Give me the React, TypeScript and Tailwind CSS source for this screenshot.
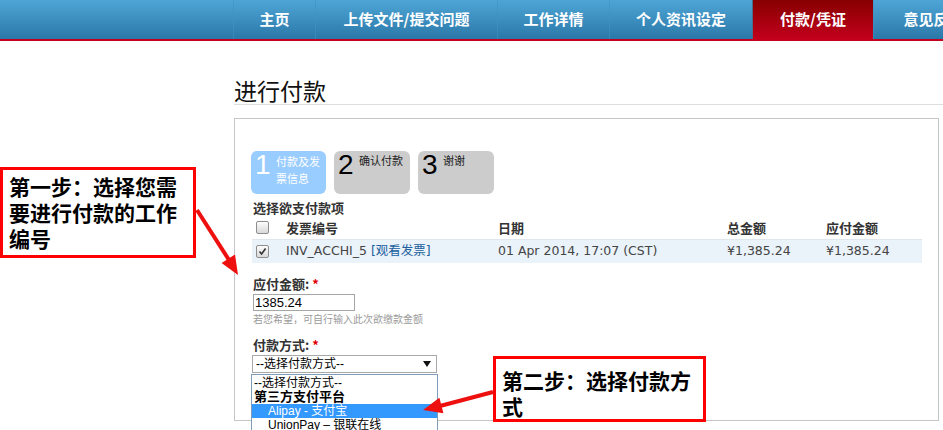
import React from "react";

const navItems = [
  { label: "主页", cls: "w-[82px]" },
  { label: "上传文件/提交问题", cls: "w-[182px]" },
  { label: "工作详情", cls: "w-[112px]" },
  { label: "个人资讯设定", cls: "w-[143px]" },
  { label: "付款/凭证", cls: "w-[121px]", active: true },
  { label: "意见反馈", cls: "w-[120px]" },
];

function Check({ checked }: { checked?: boolean }) {
  return (
    <span className="inline-flex w-[13px] h-[13px] border border-[#8e8e8e] rounded-[2px] bg-linear-to-b from-[#fdfdfd] to-[#d9d9d9] items-center justify-center">
      {checked && (
        <svg width="9" height="9" viewBox="0 0 9 9">
          <path d="M1.5 4.5 L3.6 7 L7.6 1.5" fill="none" stroke="#333" strokeWidth="1.6" />
        </svg>
      )}
    </span>
  );
}

export default function App() {
  const cjk = "font-['Noto_Sans_CJK_SC',sans-serif]";
  return (
    <div className="relative w-[943px] h-[430px] overflow-hidden bg-white font-['DejaVu_Sans','Noto_Sans_CJK_SC',sans-serif]">
      {/* Nav */}
      <nav className="h-[41px] border-b-2 border-[#c4001c] bg-linear-to-b from-[#4ea6d6] to-[#2a78a9] flex pl-[233px]">
        {navItems.map((it) => (
          <div
            key={it.label}
            className={`${it.cls} shrink-0 h-[39px] flex items-center justify-center border-l text-white font-bold text-[15px] whitespace-nowrap ${cjk} ${
              it.active ? "bg-linear-to-b from-[#870000] to-[#c3001c] border-[#4a6f8c]" : "border-[#3f93c5]/60"
            }`}
          >
            {it.label}
          </div>
        ))}
      </nav>

      {/* Main */}
      <main className="pl-[234px]">
        <h1 className={`mt-[35px] h-[29px] leading-[28px] text-[23px] text-[#111] font-normal border-b border-[#dedede] ${cjk}`}>
          进行付款
        </h1>

        <section className="mt-[13px] w-[705px] h-[303px] border border-[#c6c6c6] pl-[17px] pt-[32px]">
          {/* Steps */}
          <div className="flex gap-[8px] -ml-[1px]">
            <div className="w-[75px] h-[43px] rounded-[6px] bg-[#99ccff] flex items-start pl-[4px]">
              <span className="w-[16px] text-[28px] leading-[28px] text-white font-['Liberation_Sans',sans-serif]">1</span>
              <span className={`ml-[5px] mt-[2px] w-[46px] text-[11px] leading-[17px] text-white ${cjk}`}>付款及发票信息</span>
            </div>
            <div className="w-[76px] h-[43px] rounded-[6px] bg-[#cccccc] flex items-start pl-[4px]">
              <span className="w-[16px] text-[28px] leading-[28px] text-black font-['Liberation_Sans',sans-serif]">2</span>
              <span className={`ml-[5px] mt-[1px] text-[11px] leading-[17px] text-[#222] ${cjk}`}>确认付款</span>
            </div>
            <div className="w-[76px] h-[43px] rounded-[6px] bg-[#cccccc] flex items-start pl-[4px]">
              <span className="w-[16px] text-[28px] leading-[28px] text-black font-['Liberation_Sans',sans-serif]">3</span>
              <span className={`ml-[5px] mt-[1px] text-[11px] leading-[17px] text-[#222] ${cjk}`}>谢谢</span>
            </div>
          </div>

          <div className={`mt-[6px] pl-[1px] h-[16px] leading-[16px] text-[13px] font-bold text-[#333] ${cjk}`}>选择欲支付款项</div>

          {/* Table */}
          <div className="w-[670px] text-[12.5px]">
            <div className="grid grid-cols-[28px_212px_229px_99px_102px] h-[23px] items-center font-bold text-[#333]">
              <div className="pl-[4px] flex items-center"><Check /></div>
              <div className={`pl-[6px] text-[13px] ${cjk}`}>发票编号</div>
              <div className={`pl-[6px] text-[13px] ${cjk}`}>日期</div>
              <div className={`pl-[6px] text-[13px] ${cjk}`}>总金额</div>
              <div className={`pl-[6px] text-[13px] ${cjk}`}>应付金额</div>
            </div>
            <div className="grid grid-cols-[28px_212px_229px_99px_102px] h-[24px] items-center bg-[#eaf2fa] border-t border-[#dfe6ee] text-[#444] whitespace-nowrap">
              <div className="pl-[4px] flex items-center"><Check checked /></div>
              <div className="pl-[6px]">
                INV_ACCHI_5 <span className="text-[#21609e]">[观看发票]</span>
              </div>
              <div className="pl-[6px]">01 Apr 2014, 17:07 (CST)</div>
              <div className="pl-[6px]">¥1,385.24</div>
              <div className="pl-[6px]">¥1,385.24</div>
            </div>
          </div>

          {/* Amount */}
          <div className={`mt-[13px] pl-[1px] h-[16px] leading-[16px] text-[13px] font-bold text-[#333] ${cjk}`}>
            应付金额: <span className="text-[#e00000]">*</span>
          </div>
          <div className="mt-[2px] ml-[1px] w-[102px] h-[17px] border border-[#a6a6a6] flex items-center pl-[1px] text-[13px] text-black font-['Liberation_Sans',sans-serif]">
            1385.24
          </div>
          <div className={`mt-[2px] pl-[1px] h-[12px] leading-[12px] text-[10px] text-[#9a9a9a] ${cjk}`}>若您希望，可自行输入此次欲缴款金额</div>

          {/* Method */}
          <div className={`mt-[12px] pl-[1px] h-[16px] leading-[16px] text-[13px] font-bold text-[#333] ${cjk}`}>
            付款方式: <span className="text-[#e00000]">*</span>
          </div>
          <div className="relative mt-[2px] w-[185px] h-[18px] border border-[#a9a9a9] flex items-center justify-between pl-[3px] pr-[5px] text-[12px] text-black font-['Liberation_Sans','Noto_Sans_CJK_SC',sans-serif]">
            <span>--选择付款方式--</span>
            <svg width="8" height="6" viewBox="0 0 8 6">
              <path d="M0 0 H8 L4 6 Z" fill="#111" />
            </svg>
            <div className="absolute left-[-2px] top-[18px] w-[187px] h-[70px] border border-[#7f9db9] bg-white pt-[1px] text-[12px] leading-[14px] text-black">
              <div className="h-[14px] pl-[2px]">--选择付款方式--</div>
              <div className="h-[14px] pl-[2px] text-[13px] font-bold">第三方支付平台</div>
              <div className="h-[14px] pl-[16px] bg-[#3399ff] text-white">Alipay - 支付宝</div>
              <div className="h-[14px] pl-[16px]">UnionPay – 银联在线</div>
            </div>
          </div>
        </section>
      </main>

      {/* Callouts */}
      <div className={`absolute left-0 top-[167px] w-[196px] h-[91px] border-[3px] border-[#ff0000] bg-white pl-[6px] pt-[3px] text-[21px] leading-[26px] font-bold text-black ${cjk}`}>
        第一步：选择您需要进行付款的工作编号
      </div>
      <div className={`absolute left-[493px] top-[356px] w-[213px] h-[66px] border-[3px] border-[#ff0000] bg-white pl-[6px] pt-[8px] text-[21px] leading-[26px] font-bold text-black ${cjk}`}>
        第二步：选择付款方式
      </div>

      {/* Arrows */}
      <svg className="absolute left-0 top-0 pointer-events-none" width="943" height="430" viewBox="0 0 943 430">
        <line x1="197" y1="210" x2="229" y2="260" stroke="#ee0f0f" strokeWidth="4" />
        <polygon points="238,275 221.6,263.1 235,254.5" fill="#ee0f0f" />
        <line x1="493" y1="392" x2="440" y2="406" stroke="#ee0f0f" strokeWidth="4" />
        <polygon points="423,410 439.4,397.8 443.4,413.2" fill="#ee0f0f" />
      </svg>
    </div>
  );
}
